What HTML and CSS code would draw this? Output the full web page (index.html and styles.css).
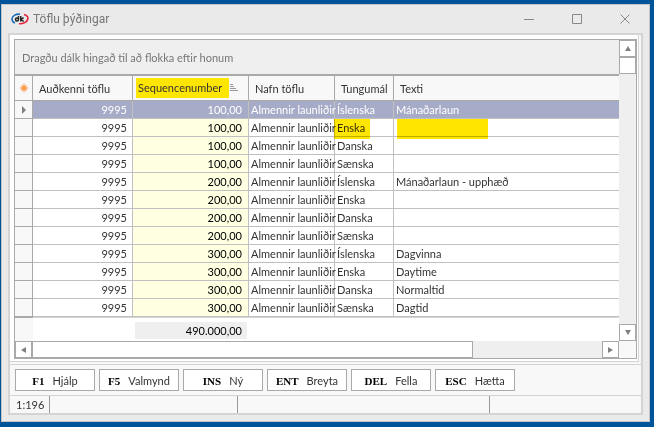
FILE: index.html
```html
<!DOCTYPE html>
<html lang="is">
<head>
  <meta charset="UTF-8">
  <meta name="viewport" content="width=device-width, initial-scale=1.0">
  <title>Töflu þýðingar</title>
  <link rel="stylesheet" href="styles.css">
</head>
<body>

  <div class="window">
    <header class="titlebar">
      <svg class="logo" width="18" height="12" viewBox="0 0 18 12">
        <path d="M9 1.200C4.500 .8 1 3 1 6c0 2 1.200 3.300 3 4" fill="none" stroke="#1c6fb5" stroke-width="1.600"/>
        <path d="M13 1.500c2.800 .8 4.200 2.500 3.800 4.500-.6 3-4.600 5-8.800 4.800" fill="none" stroke="#e8243c" stroke-width="1.600"/>
        <path d="M7.500 6.500a1.500 1.500 0 1 0-3 0 1.500 1.500 0 0 0 3 0V3M9.800 3v5.500M12.600 4.600L10 6.500l2.800 2" fill="none" stroke="#222" stroke-width="1.500"/>
      </svg>
      <h1>Töflu þýðingar</h1>
      <button class="win-btn" aria-label="Minimize"><svg width="10" height="10"><path d="M0 5.500h10" /></svg></button>
      <button class="win-btn" aria-label="Maximize"><svg width="10" height="10"><path d="M.5 .5h9v9h-9z" /></svg></button>
      <button class="win-btn" aria-label="Close"><svg width="10" height="10"><path d="M.5 .5l9 9M9.500 .5l-9 9" /></svg></button>
    </header>

    <main class="frame">
      <div class="panel">
        <div class="grid">
          <div class="view">
            <div class="group-box">Dragðu dálk hingað til að flokka eftir honum</div>
            <table>
              <colgroup>
                <col class="c-mark"><col class="c-id"><col class="c-seq"><col class="c-name"><col class="c-lang"><col>
              </colgroup>
              <thead>
                <tr>
                  <th class="mark" aria-label="Ný færsla"><svg width="10" height="10" viewBox="0 0 10 10"><circle cx="5" cy="5" r="2.600" fill="#f58a2c"/><path d="M5 0.500v9M.5 5h9M2 2l6 6M8 2l-6 6" stroke="#f7a55c" stroke-width="1"/></svg></th>
                  <th>Auðkenni töflu</th>
                  <th class="sorted"><span class="hl">Sequencenumber</span><svg width="8" height="8"><path d="M0 .5h3M0 2.500h4M0 4.500h6M0 6.500h8" stroke="#999"/></svg></th>
                  <th>Nafn töflu</th>
                  <th>Tungumál</th>
                  <th>Texti</th>
                </tr>
              </thead>
              <tbody>
                <tr class="selected"><td class="mark"><svg width="4" height="8"><path d="M0 0l4 4-4 4z" fill="#808080"/></svg></td><td class="num">9995</td><td class="seq">100,00</td><td>Almennir launliðir</td><td>Íslenska</td><td>Mánaðarlaun</td></tr>
                <tr><td class="mark"></td><td class="num">9995</td><td class="seq">100,00</td><td>Almennir launliðir</td><td class="marker marker-lang">Enska</td><td class="marker marker-text"></td></tr>
                <tr><td class="mark"></td><td class="num">9995</td><td class="seq">100,00</td><td>Almennir launliðir</td><td>Danska</td><td></td></tr>
                <tr><td class="mark"></td><td class="num">9995</td><td class="seq">100,00</td><td>Almennir launliðir</td><td>Sænska</td><td></td></tr>
                <tr><td class="mark"></td><td class="num">9995</td><td class="seq">200,00</td><td>Almennir launliðir</td><td>Íslenska</td><td>Mánaðarlaun - upphæð</td></tr>
                <tr><td class="mark"></td><td class="num">9995</td><td class="seq">200,00</td><td>Almennir launliðir</td><td>Enska</td><td></td></tr>
                <tr><td class="mark"></td><td class="num">9995</td><td class="seq">200,00</td><td>Almennir launliðir</td><td>Danska</td><td></td></tr>
                <tr><td class="mark"></td><td class="num">9995</td><td class="seq">200,00</td><td>Almennir launliðir</td><td>Sænska</td><td></td></tr>
                <tr><td class="mark"></td><td class="num">9995</td><td class="seq">300,00</td><td>Almennir launliðir</td><td>Íslenska</td><td>Dagvinna</td></tr>
                <tr><td class="mark"></td><td class="num">9995</td><td class="seq">300,00</td><td>Almennir launliðir</td><td>Enska</td><td>Daytime</td></tr>
                <tr><td class="mark"></td><td class="num">9995</td><td class="seq">300,00</td><td>Almennir launliðir</td><td>Danska</td><td>Normaltid</td></tr>
                <tr><td class="mark"></td><td class="num">9995</td><td class="seq">300,00</td><td>Almennir launliðir</td><td>Sænska</td><td>Dagtid</td></tr>
              </tbody>
              <tfoot>
                <tr><td class="mark"></td><td></td><td class="total"><span>490.000,00</span></td><td></td><td></td><td></td></tr>
              </tfoot>
            </table>
          </div>

          <div class="scroll-v">
            <button aria-label="Upp"><svg width="6" height="5"><path d="M3 0l3 5H0z"/></svg></button>
            <div class="thumb"></div>
            <button class="last" aria-label="Niður"><svg width="6" height="5"><path d="M0 0h6L3 5z"/></svg></button>
          </div>
          <div class="scroll-h">
            <button aria-label="Vinstri"><svg width="5" height="6"><path d="M5 0v6L0 3z"/></svg></button>
            <div class="thumb"></div>
            <button class="last" aria-label="Hægri"><svg width="5" height="6"><path d="M0 0l5 3-5 3z"/></svg></button>
          </div>
        </div>
      </div>

      <div class="actions">
        <button><kbd>F1</kbd>Hjálp</button>
        <button><kbd>F5</kbd>Valmynd</button>
        <button><kbd>INS</kbd>Ný</button>
        <button><kbd>ENT</kbd>Breyta</button>
        <button><kbd>DEL</kbd>Fella</button>
        <button><kbd>ESC</kbd>Hætta</button>
      </div>

      <footer class="status">
        <span>1:196</span>
        <span></span>
        <span></span>
        <span></span>
      </footer>
    </main>
  </div>

</body>
</html>
```
FILE: styles.css
```css
* {
  box-sizing: border-box;
}

body {
  margin: 0;
  padding: 4px 4px 5px 1px;
  height: 100vh;
  background: #005499;
  font-family: Lato, sans-serif;
  font-size: 11px;
  color: #333;
}

button {
  padding: 0;
  font: inherit;
  color: inherit;
}

svg {
  display: block;
}

.window {
  display: flex;
  flex-direction: column;
  height: 100%;
  padding: 0 6px 6px;
  background: #eaeaea;
  border: 1px solid #c4c4c4;
}

/* title bar */
.titlebar {
  display: flex;
  align-items: center;
  flex: 0 0 28px;
  margin-right: -6px;
}

.logo {
  margin: 0 4px 0 3px;
}

.titlebar h1 {
  flex: 1;
  margin: 0;
  font-family: Roboto, sans-serif;
  font-size: 12px;
  font-weight: normal;
  color: #777;
}

.win-btn {
  display: flex;
  align-items: center;
  justify-content: center;
  width: 48px;
  height: 28px;
  background: none;
  border: 0;
}

.win-btn path {
  fill: none;
  stroke: #888;
}

.frame {
  flex: 1;
  display: flex;
  flex-direction: column;
  min-height: 0;
  background: #f8f8f8;
  border: 2px solid #d4d4d4;
}

.panel {
  flex: 1;
  display: flex;
  min-height: 0;
  margin: 0 2px 2px 0;
  padding: 4px 1px 2px 4px;
  background: #fff;
  border: solid #d4d4d4;
  border-width: 0 1px 1px 0;
}

/* data grid */
.grid {
  flex: 1;
  display: grid;
  grid-template-columns: 1fr 17px;
  grid-template-rows: 1fr 17px;
  min-width: 0;
  background: #f8f8f8;
  border: 1px solid #a9a9a9;
}

.view {
  min-width: 0;
  overflow: hidden;
  background: #fff;
}

.group-box {
  height: 36px;
  padding-left: 7px;
  line-height: 36px;
  color: #777;
  background: #efefef;
  border-bottom: 2px solid #a9a9a9;
}

table {
  width: 100%;
  table-layout: fixed;
  border-collapse: separate;
  border-spacing: 0;
  white-space: nowrap;
}

.c-mark { width: 18px; }
.c-id { width: 100px; }
.c-seq { width: 116px; }
.c-name { width: 86px; }
.c-lang { width: 59px; }

th {
  height: 25px;
  padding: 0 0 0 6px;
  font-weight: normal;
  text-align: left;
  background: #f8f8f8;
  border: solid #a9a9a9;
  border-width: 0 1px 1px 0;
}

td {
  height: 18px;
  padding: 0 0 0 2px;
  line-height: 17px;
  border: solid #c0c0c0;
  border-width: 0 1px 1px 0;
}

th:last-child,
td:last-child {
  border-right: 0;
}

th.sorted {
  padding-left: 3px;
}

.sorted svg {
  display: inline-block;
  margin-left: 1px;
}

.hl {
  display: inline-block;
  width: 93px;
  padding-left: 2px;
  line-height: 20px;
  background: #ffe600;
}

.mark,
th.mark {
  padding: 0;
  background: #f8f8f8;
  border-color: #a9a9a9;
}

.mark svg {
  margin: 0 auto;
}

.num {
  padding-right: 5px;
  text-align: right;
}

.seq {
  padding-right: 6px;
  text-align: right;
  color: #000;
  background: #ffffe1;
}

.selected td:not(.mark) {
  color: #fff;
  background: #a6abc7;
}

/* highlighter strokes lying over the cells */
.marker {
  position: relative;
}

.marker::after {
  content: "";
  position: absolute;
  top: 0;
  left: -1px;
  width: 36px;
  height: 20px;
  background: #ffe600;
  mix-blend-mode: multiply;
}

.marker-text::after {
  left: 3px;
  width: 91px;
}

tfoot td {
  height: 24px;
  padding: 1px 0 0;
  border: 0;
  border-top: 1px solid #d4d4d4;
}

tfoot tr {
  color: #000;
}

.total span {
  display: block;
  margin: 0 2px;
  padding-right: 5px;
  text-align: right;
  background: #efefef;
}

/* scrollbars */
.scroll-v,
.scroll-h {
  display: flex;
  background: #efefef;
}

.scroll-v {
  flex-direction: column;
}

.scroll-v button,
.scroll-h button {
  display: flex;
  align-items: center;
  justify-content: center;
  width: 17px;
  height: 17px;
  background: #fff;
  border: 1px solid #a9a9a9;
}

.scroll-v path,
.scroll-h path {
  fill: #808080;
}

.thumb {
  height: 17px;
  background: #fff;
  border: 1px solid #a9a9a9;
}

.scroll-h .thumb {
  width: 73%;
}

.scroll-v .last {
  margin-top: auto;
}

.scroll-h .last {
  margin-left: auto;
}

/* function keys */
.actions {
  display: flex;
  gap: 4px;
  padding: 4px 5px;
  border-top: 1px solid #d4d4d4;
}

.actions button {
  width: 80px;
  height: 22px;
  background: #fff;
  border: 1px solid #a9a9a9;
}

kbd {
  margin-right: 8px;
  font-family: "Liberation Serif", serif;
  font-size: 11px;
  font-weight: bold;
  color: #000;
}

.status {
  display: flex;
  flex: 0 0 18px;
  line-height: 17px;
  border-top: 1px solid #d4d4d4;
}

.status span {
  flex: 188;
  border-right: 1px solid #999;
}

.status span:first-child {
  flex: 0 0 40px;
  padding-left: 6px;
}

.status span:nth-child(3) {
  flex: 251;
}

.status span:last-child {
  flex: 152;
  border-right: 0;
}
```
